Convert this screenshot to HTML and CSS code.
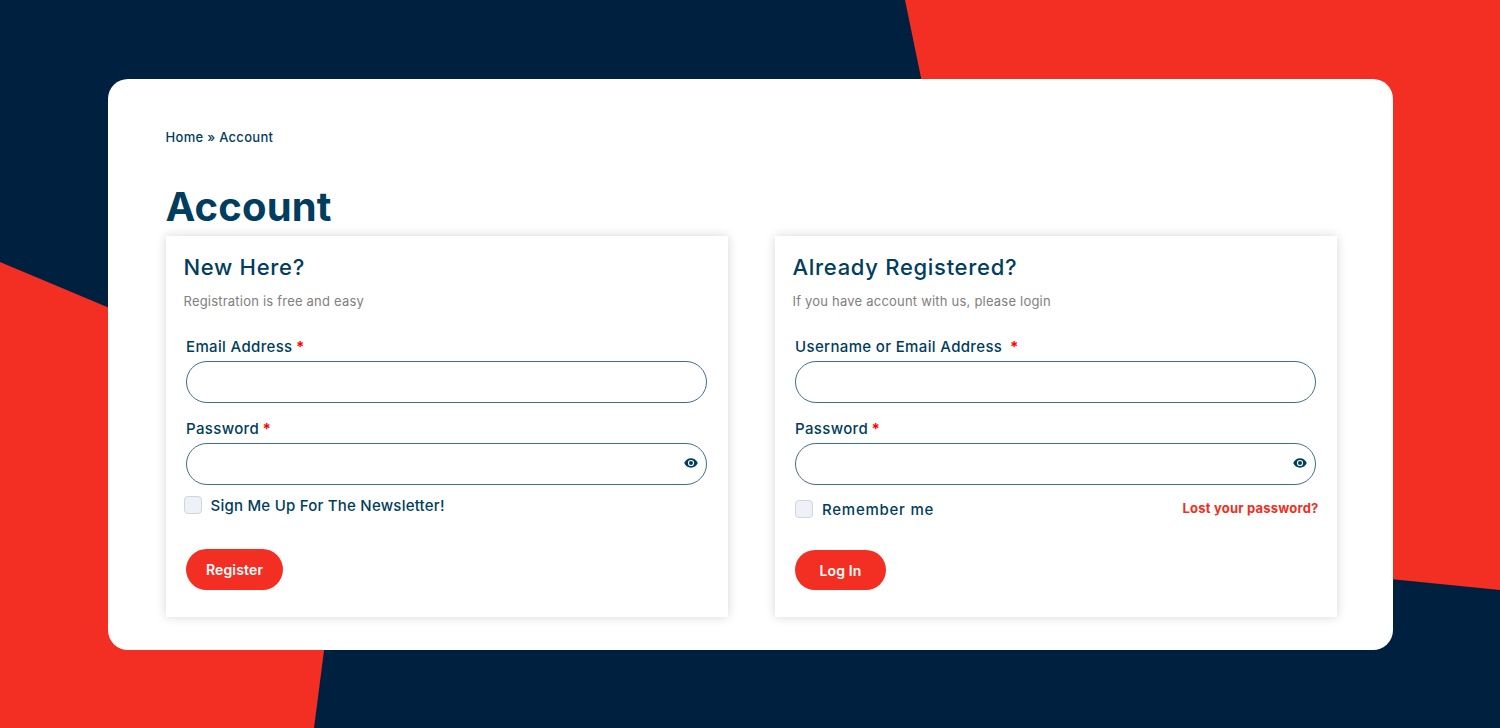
FILE: index.html
```html
<!DOCTYPE html>
<html lang="en">

<head>
    <meta charset="UTF-8">
    <meta name="viewport" content="width=device-width, initial-scale=1.0">
    <title>Account</title>
    <link rel="stylesheet" href="styles.css">
</head>

<body>
    <svg class="backdrop" viewBox="0 0 1500 728" aria-hidden="true">
        <polygon class="red" points="905,0 1500,0 1500,590 1000,540 940,170"></polygon>
        <polygon class="red" points="0,262 355,411 314,728 0,728"></polygon>
    </svg>

    <main class="card">
        <nav class="crumbs">Home » Account</nav>
        <h1>Account</h1>

        <div class="columns">
            <form class="panel">
                <h2>New Here?</h2>
                <p class="intro">Registration is free and easy</p>

                <label class="field-label" for="reg-email">Email Address <span class="req">*</span></label>
                <div class="field">
                    <input type="text" id="reg-email" autocomplete="off">
                </div>

                <label class="field-label" for="reg-pass">Password <span class="req">*</span></label>
                <div class="field">
                    <input type="password" id="reg-pass" autocomplete="off">
                    <svg class="eye" viewBox="0 0 14 10"><use href="#eye-icon"></use></svg>
                </div>

                <label class="check check-news">
                    <span class="box"></span>
                    <span class="check-text">Sign Me Up For The Newsletter!</span>
                </label>

                <button class="btn btn-register" type="button">Register</button>
            </form>

            <form class="panel">
                <h2>Already Registered?</h2>
                <p class="intro">If you have account with us, please login</p>

                <label class="field-label" for="log-user">Username or Email Address&nbsp; <span class="req">*</span></label>
                <div class="field">
                    <input type="text" id="log-user" autocomplete="off">
                </div>

                <label class="field-label" for="log-pass">Password <span class="req">*</span></label>
                <div class="field">
                    <input type="password" id="log-pass" autocomplete="off">
                    <svg class="eye" viewBox="0 0 14 10"><use href="#eye-icon"></use></svg>
                </div>

                <div class="login-row">
                    <label class="check check-remember">
                        <span class="box"></span>
                        <span class="check-text">Remember me</span>
                    </label>
                    <a class="lost" href="#">Lost your password?</a>
                </div>

                <button class="btn btn-login" type="button">Log In</button>
            </form>
        </div>
    </main>

    <svg class="defs" aria-hidden="true">
        <symbol id="eye-icon" viewBox="0 0 14 10">
            <path fill-rule="evenodd" fill="#003d5e" d="M7 .3C4 .3 1.6 2.2.2 5c1.4 2.8 3.8 4.7 6.8 4.7s5.4-1.9 6.8-4.7C12.4 2.2 10 .3 7 .3zM7 1.9a3.1 3.1 0 1 1 0 6.2 3.1 3.1 0 0 1 0-6.2z"></path>
            <circle cx="7" cy="5" r="2" fill="#003d5e"></circle>
        </symbol>
    </svg>
</body>

</html>
```

FILE: styles.css
```css
* {
    padding: 0;
    margin: 0;
    box-sizing: border-box;
    font-family: Inter, "Open Sans", Arial, sans-serif;
}

body {
    height: 728px;
    overflow: hidden;
    background-color: #00203f;
    padding-top: 79px;
    color: #003d5e;
}

.backdrop {
    position: absolute;
    top: 0;
    left: 0;
    width: 1500px;
    height: 728px;
}

.backdrop .red {
    fill: #f32e22;
}

.defs {
    position: absolute;
    width: 0;
    height: 0;
}

.card {
    position: relative;
    width: 1285px;
    height: 571px;
    margin: 0 auto;
    padding: 50px 56px 0 58px;
    background-color: white;
    border-radius: 20px;
}

.crumbs {
    font-size: 13px;
    font-weight: 500;
    line-height: 16px;
    letter-spacing: 0.3px;
}

h1 {
    margin-top: 34px;
    font-size: 40px;
    font-weight: 700;
    line-height: 56px;
    letter-spacing: 0.15px;
}

.columns {
    display: grid;
    grid-template-columns: 562px 562px;
    gap: 47px;
    margin-top: 1px;
}

.panel {
    height: 381px;
    padding: 17px 21px 0 18px;
    background-color: white;
    box-shadow: 0 0 10px rgba(0, 0, 0, 0.16);
}

h2 {
    font-size: 22px;
    font-weight: 500;
    line-height: 28px;
    letter-spacing: 0.7px;
}

.intro {
    margin-top: 11px;
    font-size: 13px;
    line-height: 18px;
    letter-spacing: 0.21px;
    color: #808080;
}

.field-label {
    display: block;
    margin: 27px 0 4px 2.5px;
    font-size: 15px;
    font-weight: 500;
    line-height: 20px;
    letter-spacing: 0.35px;
}

.field + .field-label {
    margin-top: 16px;
}

.req {
    margin-left: -1px;
    color: #f00;
    font-weight: 700;
}

.field {
    position: relative;
    margin-left: 2.5px;
}

input {
    display: block;
    width: 100%;
    height: 42px;
    border: 1px solid #3f6f8f;
    border-radius: 21px;
    background-color: white;
}

*:focus {
    outline: none;
}

.eye {
    position: absolute;
    top: 15px;
    right: 9px;
    width: 14px;
    height: 10px;
}

.check {
    display: flex;
    align-items: center;
    font-size: 15px;
    font-weight: 500;
    letter-spacing: 0.23px;
}

.check-text {
    margin-top: 1px;
}

.box {
    width: 18px;
    height: 18px;
    margin-right: 9px;
    background-color: #eef1f7;
    border: 1px solid #cfd6de;
    border-radius: 4px;
}

.check-news {
    margin-top: 10px;
}

.check-remember {
    letter-spacing: 0.75px;
}

.login-row {
    display: flex;
    justify-content: space-between;
    align-items: center;
    margin: 14px -3px 0 0;
    padding-left: 2.5px;
}

.lost {
    margin-top: -2px;
    font-size: 13px;
    font-weight: 700;
    letter-spacing: 0.2px;
    color: #f32e22;
    text-decoration: none;
}

.btn {
    display: block;
    border: none;
    height: 41px;
    border-radius: 21px;
    background-color: #f32e22;
    color: white;
    font-size: 14px;
    font-weight: 600;
    letter-spacing: 0.15px;
    cursor: pointer;
}

.btn-register {
    width: 97px;
    margin: 34px 0 0 2.5px;
}

.btn-login {
    width: 91px;
    height: 40px;
    margin: 31px 0 0 2.5px;
}
```
